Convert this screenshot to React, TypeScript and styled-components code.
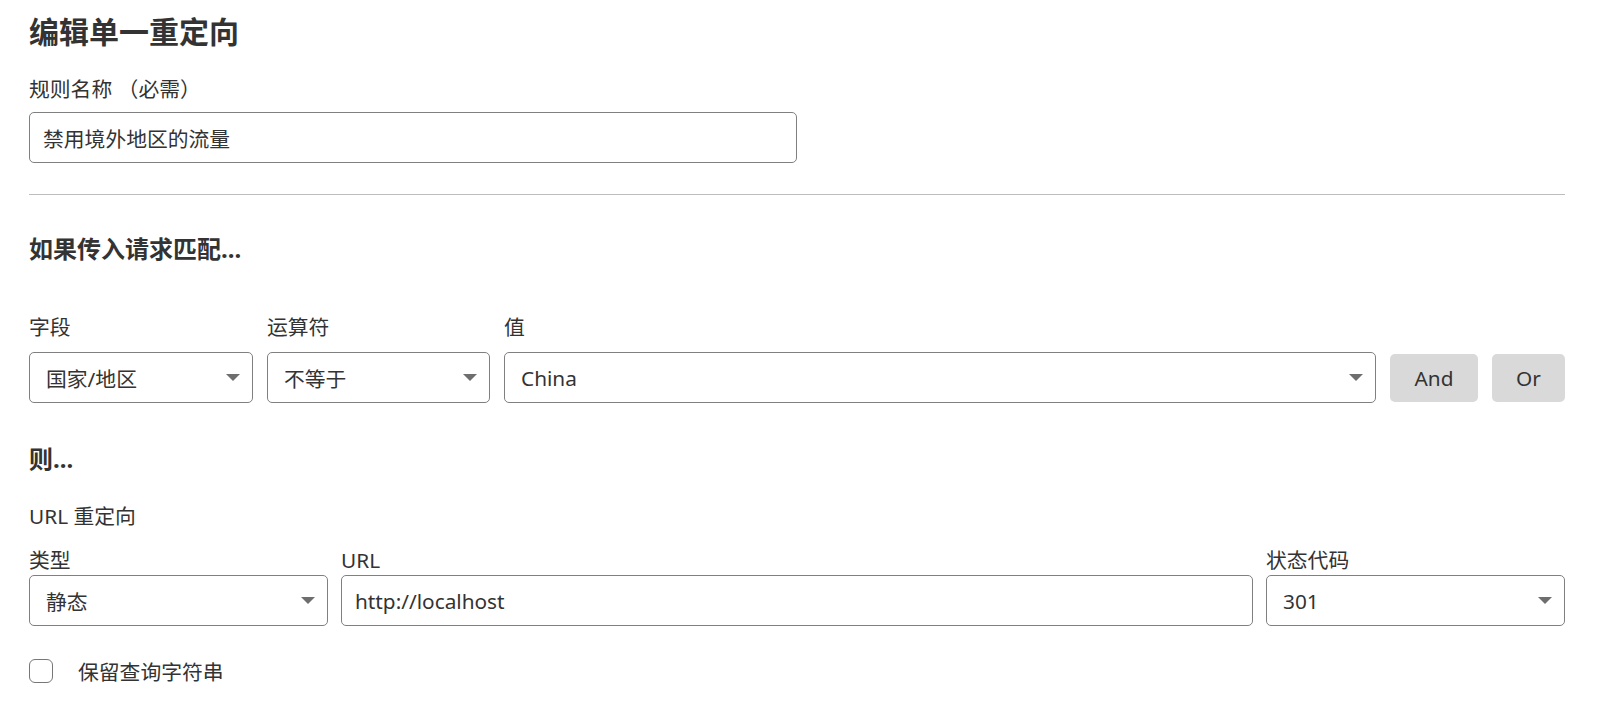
import React from "react";
import styled, { createGlobalStyle } from "styled-components";

const Global = createGlobalStyle`
  html, body { margin: 0; padding: 0; background: #ffffff; }
  body {
    font-family: "Noto Sans", "Noto Sans CJK SC", sans-serif;
    color: #313131;
  }
  * { box-sizing: border-box; }
`;

const Page = styled.div`
  padding: 14px 42px 20px 29px;
  display: flex;
  flex-direction: column;
`;

const Title = styled.h1`
  margin: 0;
  font-size: 30px;
  line-height: 36px;
  font-weight: 700;
  color: #333;
`;

const SectionTitle = styled.h2<{ $mt: number }>`
  margin: ${(p) => p.$mt}px 0 0;
  font-size: 24px;
  line-height: 32px;
  font-weight: 700;
  color: #333;
`;

const Label = styled.div<{ $mt?: number }>`
  margin-top: ${(p) => p.$mt ?? 0}px;
  font-size: 20.8px;
  line-height: 28px;
  color: #333;
  white-space: pre;
`;

const TextInput = styled.div<{ $width?: string }>`
  width: ${(p) => p.$width ?? "100%"};
  height: 51px;
  border: 1px solid #808080;
  border-radius: 5px;
  padding: 0 13px;
  display: flex;
  align-items: center;
  font-size: 20.8px;
  color: #333;
  background: #fff;
`;

const SelectBox = styled.div`
  height: 51px;
  border: 1px solid #808080;
  border-radius: 5px;
  padding: 0 12px 0 16px;
  display: flex;
  align-items: center;
  justify-content: space-between;
  font-size: 20.8px;
  color: #333;
  background: #fff;
`;

const Caret = styled.span`
  width: 0;
  height: 0;
  border-left: 7px solid transparent;
  border-right: 7px solid transparent;
  border-top: 7px solid #6e6e6e;
`;

const Divider = styled.hr`
  margin: 31px 0 0;
  border: none;
  border-top: 1px solid #bdbdbd;
  height: 0;
`;

const CondRow = styled.div`
  margin-top: 48px;
  display: grid;
  grid-template-columns: 224px 223px 1fr 88px 73px;
  column-gap: 14px;
  align-items: end;
`;

const Field = styled.div<{ $gap: number }>`
  display: flex;
  flex-direction: column;
  gap: ${(p) => p.$gap}px;
  min-width: 0;
`;

const Button = styled.button`
  height: 48px;
  margin-bottom: 1px;
  border: none;
  border-radius: 5px;
  background: #d9d9d9;
  font-family: inherit;
  font-size: 20.8px;
  color: #333;
  padding: 0;
`;

const ActionRow = styled.div`
  margin-top: 16px;
  display: grid;
  grid-template-columns: 299px 1fr 299px;
  column-gap: 13px;
`;

const CheckRow = styled.label`
  margin-top: 30px;
  display: flex;
  align-items: center;
  gap: 25px;
  font-size: 20.8px;
  color: #333;
`;

const CheckBox = styled.span`
  width: 24px;
  height: 24px;
  border: 1px solid #777;
  border-radius: 6px;
  background: #fff;
`;

const Select: React.FC<{ value: string }> = ({ value }) => (
  <SelectBox>
    <span>{value}</span>
    <Caret />
  </SelectBox>
);

export default function App() {
  return (
    <>
      <Global />
      <Page>
        <Title>编辑单一重定向</Title>
        <Label $mt={25}>规则名称 （必需）</Label>
        <TextInput $width="50%" style={{ marginTop: 9 }}>禁用境外地区的流量</TextInput>
        <Divider />
        <SectionTitle $mt={38}>如果传入请求匹配...</SectionTitle>
        <CondRow>
          <Field $gap={11}>
            <Label>字段</Label>
            <Select value="国家/地区" />
          </Field>
          <Field $gap={11}>
            <Label>运算符</Label>
            <Select value="不等于" />
          </Field>
          <Field $gap={11}>
            <Label>值</Label>
            <Select value="China" />
          </Field>
          <Button>And</Button>
          <Button>Or</Button>
        </CondRow>
        <SectionTitle $mt={40}>则...</SectionTitle>
        <Label $mt={27}>URL 重定向</Label>
        <ActionRow>
          <Field $gap={1}>
            <Label>类型</Label>
            <Select value="静态" />
          </Field>
          <Field $gap={1}>
            <Label>URL</Label>
            <TextInput>http://localhost</TextInput>
          </Field>
          <Field $gap={1}>
            <Label>状态代码</Label>
            <Select value="301" />
          </Field>
        </ActionRow>
        <CheckRow>
          <CheckBox />
          <span>保留查询字符串</span>
        </CheckRow>
      </Page>
    </>
  );
}
